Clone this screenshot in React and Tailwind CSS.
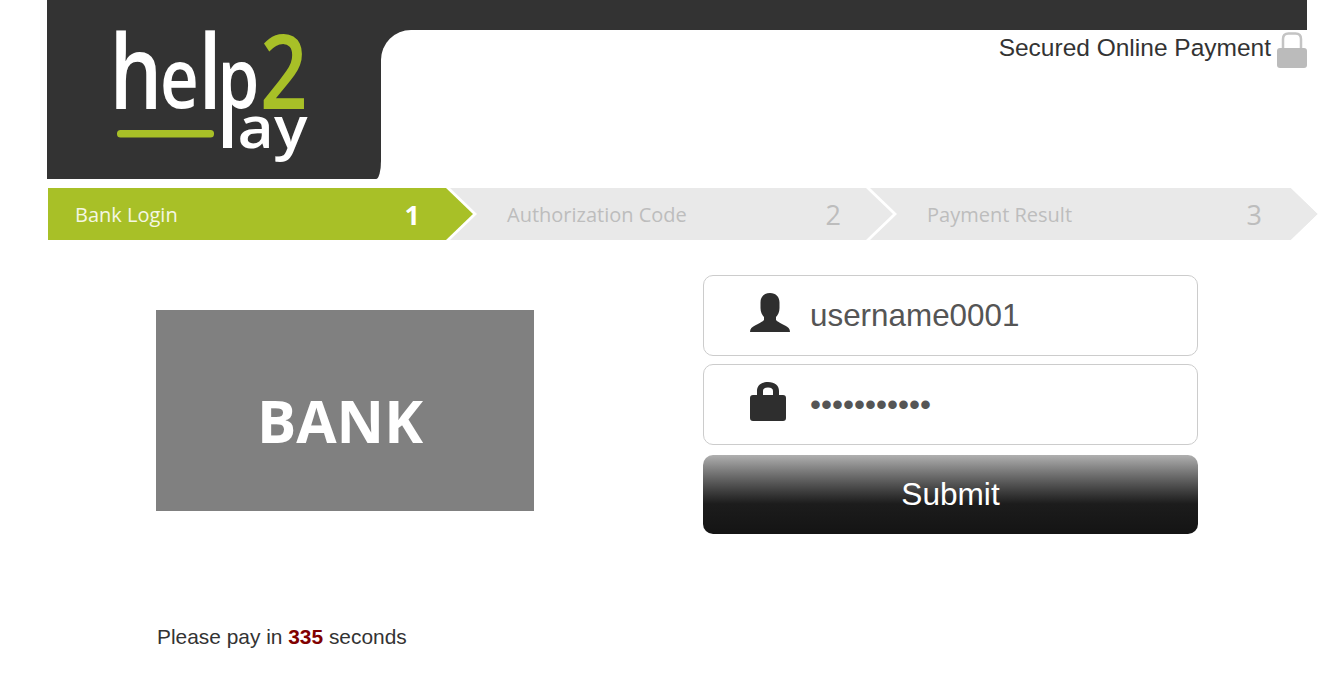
const sans = "font-['Liberation_Sans',Arial,sans-serif]";
const seg = "font-['Open_Sans',sans-serif]";

function Logo() {
  // viewBox uses page coordinates of the dark panel (x from 47, y from 30)
  return (
    <svg viewBox="47 30 334 149" className="block w-[334px] h-[149px]" fontFamily="'Open Sans', sans-serif" fontWeight="600">
      <text transform="scale(0.8 1)" y="108.500" fill="#fff">
        <tspan x="137" fontSize="104">h</tspan>
        <tspan x="200" fontSize="84">e</tspan>
        <tspan x="248" fontSize="104">l</tspan>
        <tspan x="272" fontSize="84">p</tspan>
      </text>
      <rect x="223" y="100" width="9" height="48" fill="#fff" />
      <text transform="scale(0.8 1)" x="325" y="109" fontSize="104" fill="#a8c027">2</text>
      <text transform="scale(1.08 1)" x="220" y="148" fontSize="58" fill="#fff">ay</text>
      <rect x="117" y="130" width="97" height="7.500" rx="3.500" fill="#a8c027" />
    </svg>
  );
}

function UserIcon() {
  return (
    <svg viewBox="0 0 40 39" className="w-[40px] h-[39px] shrink-0 -mt-[6px]" fill="#2e2e2e">
      <path d="M20 0c-6 0-9.500 4-9.500 9.500v5.500c0 4 1.500 7 3.500 9v3c-1 1.500-5 3.500-9 5.500-3 1.500-5 3-5 6.500h40c0-3.500-2-5-5-6.500-4-2-8-4-9-5.500v-3c2-2 3.500-5 3.500-9v-5.500c0-5.500-3.500-9.500-9.500-9.500z" />
    </svg>
  );
}

function LockIcon() {
  return (
    <svg viewBox="0 0 36 39" className="w-[36px] h-[39px] shrink-0 -mt-[6px]" fill="#2e2e2e">
      <path fillRule="evenodd" d="M7 13v-4c0-5.500 4-9 11-9s11 3.500 11 9v4h4c2 0 3 1 3 3v20c0 2-1 3-3 3h-30c-2 0-3-1-3-3v-20c0-2 1-3 3-3zm6 0h10v-4c0-2-1.500-3.500-5-3.500s-5 1.500-5 3.500z" />
    </svg>
  );
}

function SecureLock() {
  return (
    <svg viewBox="0 0 30 36" className="w-[30px] h-[36px] shrink-0">
      <path d="M6 18v-11q0-5.500 5.500-5.500h7q5.500 0 5.500 5.500v11" fill="none" stroke="#c4c4c4" strokeWidth="2.500" />
      <rect x="0" y="16" width="30" height="20" rx="3" fill="#bbbbbb" />
    </svg>
  );
}

function Step({ label, num, active, outer, inner, pad, z }) {
  return (
    <div className={`h-[52px] bg-white shrink-0 [clip-path:polygon(0_0,calc(100%-27px)_0,100%_50%,calc(100%-27px)_100%,0_100%)] ${outer} ${z}`}>
      <div className={`h-full flex items-center justify-between pt-[2px] ${seg} [clip-path:polygon(0_0,calc(100%-27px)_0,100%_50%,calc(100%-27px)_100%,0_100%)] ${inner} ${pad} ${active ? 'bg-[#a8c027] text-[#f4f7e4]' : 'bg-[#e9e9e9] text-[#bdbdbd]'}`}>
        <span className="text-[20px]">{label}</span>
        <span className={`text-[27px] ${active ? 'font-bold text-white' : ''}`}>{num}</span>
      </div>
    </div>
  );
}

export default function App() {
  return (
    <div className={`w-[1343px] min-h-[679px] bg-white overflow-hidden ${sans}`}>
      <div className="ml-[47px] w-[1260px]">
        {/* Header */}
        <div className="h-[30px] bg-[#333333]" />
        <div className="flex h-[149px]">
          <div className="w-[334px] bg-[#333333] rounded-br-[5px_18px]">
            <Logo />
          </div>
          <div className="flex-1 bg-[#333333]">
            <div className="h-full bg-white rounded-tl-[30px] flex justify-end items-start gap-[6px] pt-[2px] text-[24.500px] leading-[32px] text-[#333333]">
              <span>Secured Online Payment</span>
              <SecureLock />
            </div>
          </div>
        </div>

        {/* Steps */}
        <div className="flex mt-[9px] ml-px">
          <Step label="Bank Login" num="1" active outer="w-[429px]" inner="w-[425px] pl-[27px] pr-[53px]" z="z-30" />
          <Step label="Authorization Code" num="2" outer="w-[452px] -ml-[32px]" inner="w-[448px] pl-[62px] pr-[52px]" z="z-20" />
          <Step label="Payment Result" num="3" outer="w-[449px] -ml-[28px]" inner="w-[449px] pl-[58px] pr-[56px]" z="z-10" />
        </div>

        {/* Main */}
        <div className="flex mt-[35px] pl-[109px]">
          <div className="w-[378px]">
            <div className={`mt-[35px] h-[201px] bg-[#808080] flex justify-center items-center pt-[20px] pr-[10px] text-[58.500px] font-bold text-white ${seg}`}>
              BANK
            </div>
          </div>
          <div className="ml-[169px] w-[495px] flex flex-col">
            <div className="h-[81px] rounded-[10px] border border-[#cccccc] flex items-center pl-[46px] gap-[20px]">
              <UserIcon />
              <input readOnly value="username0001" className={`w-[380px] outline-none text-[31.400px] text-[#555555] ${sans}`} />
            </div>
            <div className="mt-[8px] h-[81px] rounded-[10px] border border-[#cccccc] flex items-center pl-[46px] gap-[24px]">
              <LockIcon />
              <input readOnly type="password" value="username000" className={`w-[380px] outline-none text-[31.400px] text-[#555555] ${sans}`} />
            </div>
            <button className="mt-[10px] h-[79px] rounded-[10px] bg-gradient-to-b from-[#b0b0b0] via-[#1c1c1c] via-[62%] to-[#141414] text-white text-[31.600px]">
              Submit
            </button>
          </div>
        </div>

        <p className="mt-[90px] ml-[110px] text-[20.900px] leading-[26px] text-[#333333]">
          Please pay in <b className="text-[#800000]">335</b> seconds
        </p>
      </div>
    </div>
  );
}
